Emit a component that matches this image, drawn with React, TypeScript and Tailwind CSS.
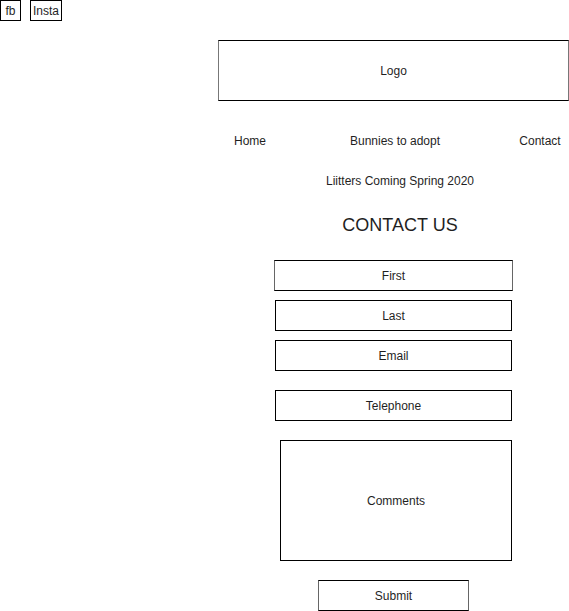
export default function App() {
  const box = "border border-black flex items-center justify-center"

  return (
    <div className="w-[569px] h-[611px] bg-white overflow-hidden text-[12px] leading-[14px] text-[#1f1f1f] font-['Liberation_Sans',Arial,sans-serif]">
      {/* social links */}
      <div className="flex">
        <div className={`${box} w-[21px] h-[21px]`}>fb</div>
        <div className={`${box} ml-[9px] w-[32px] h-[21px]`}>Insta</div>
      </div>

      {/* logo */}
      <div className={`${box} ml-[218px] mt-[19px] w-[351px] h-[61px] border-x-[#777]`}>Logo</div>

      {/* nav */}
      <div className="ml-[218px] mt-[30px] h-[20px] flex items-center">
        <span className="w-[64px] shrink-0 text-center">Home</span>
        <span className="w-[226px] shrink-0 text-center">Bunnies to adopt</span>
        <span className="w-[64px] shrink-0 text-center whitespace-nowrap">Contact</span>
      </div>

      {/* headings */}
      <div className="ml-[218px] w-[364px] flex flex-col items-center">
        <div className="mt-[20px] h-[20px] flex items-center">Liitters Coming Spring 2020</div>
        <h1 className="mt-[22px] h-[24px] flex items-center text-[18px]">CONTACT US</h1>
      </div>

      {/* form */}
      <div className="flex flex-col">
        <div className={`${box} ml-[274px] mt-[23px] w-[239px] h-[31px] border-x-[#666]`}>First</div>
        <div className={`${box} ml-[275px] mt-[9px] w-[237px] h-[31px]`}>Last</div>
        <div className={`${box} ml-[275px] mt-[9px] w-[237px] h-[31px]`}>Email</div>
        <div className={`${box} ml-[275px] mt-[19px] w-[237px] h-[31px]`}>Telephone</div>
        <div className={`${box} ml-[280px] mt-[19px] w-[232px] h-[121px]`}>Comments</div>
        <div className={`${box} ml-[318px] mt-[19px] w-[151px] h-[31px] border-x-[#666]`}>Submit</div>
      </div>
    </div>
  )
}
